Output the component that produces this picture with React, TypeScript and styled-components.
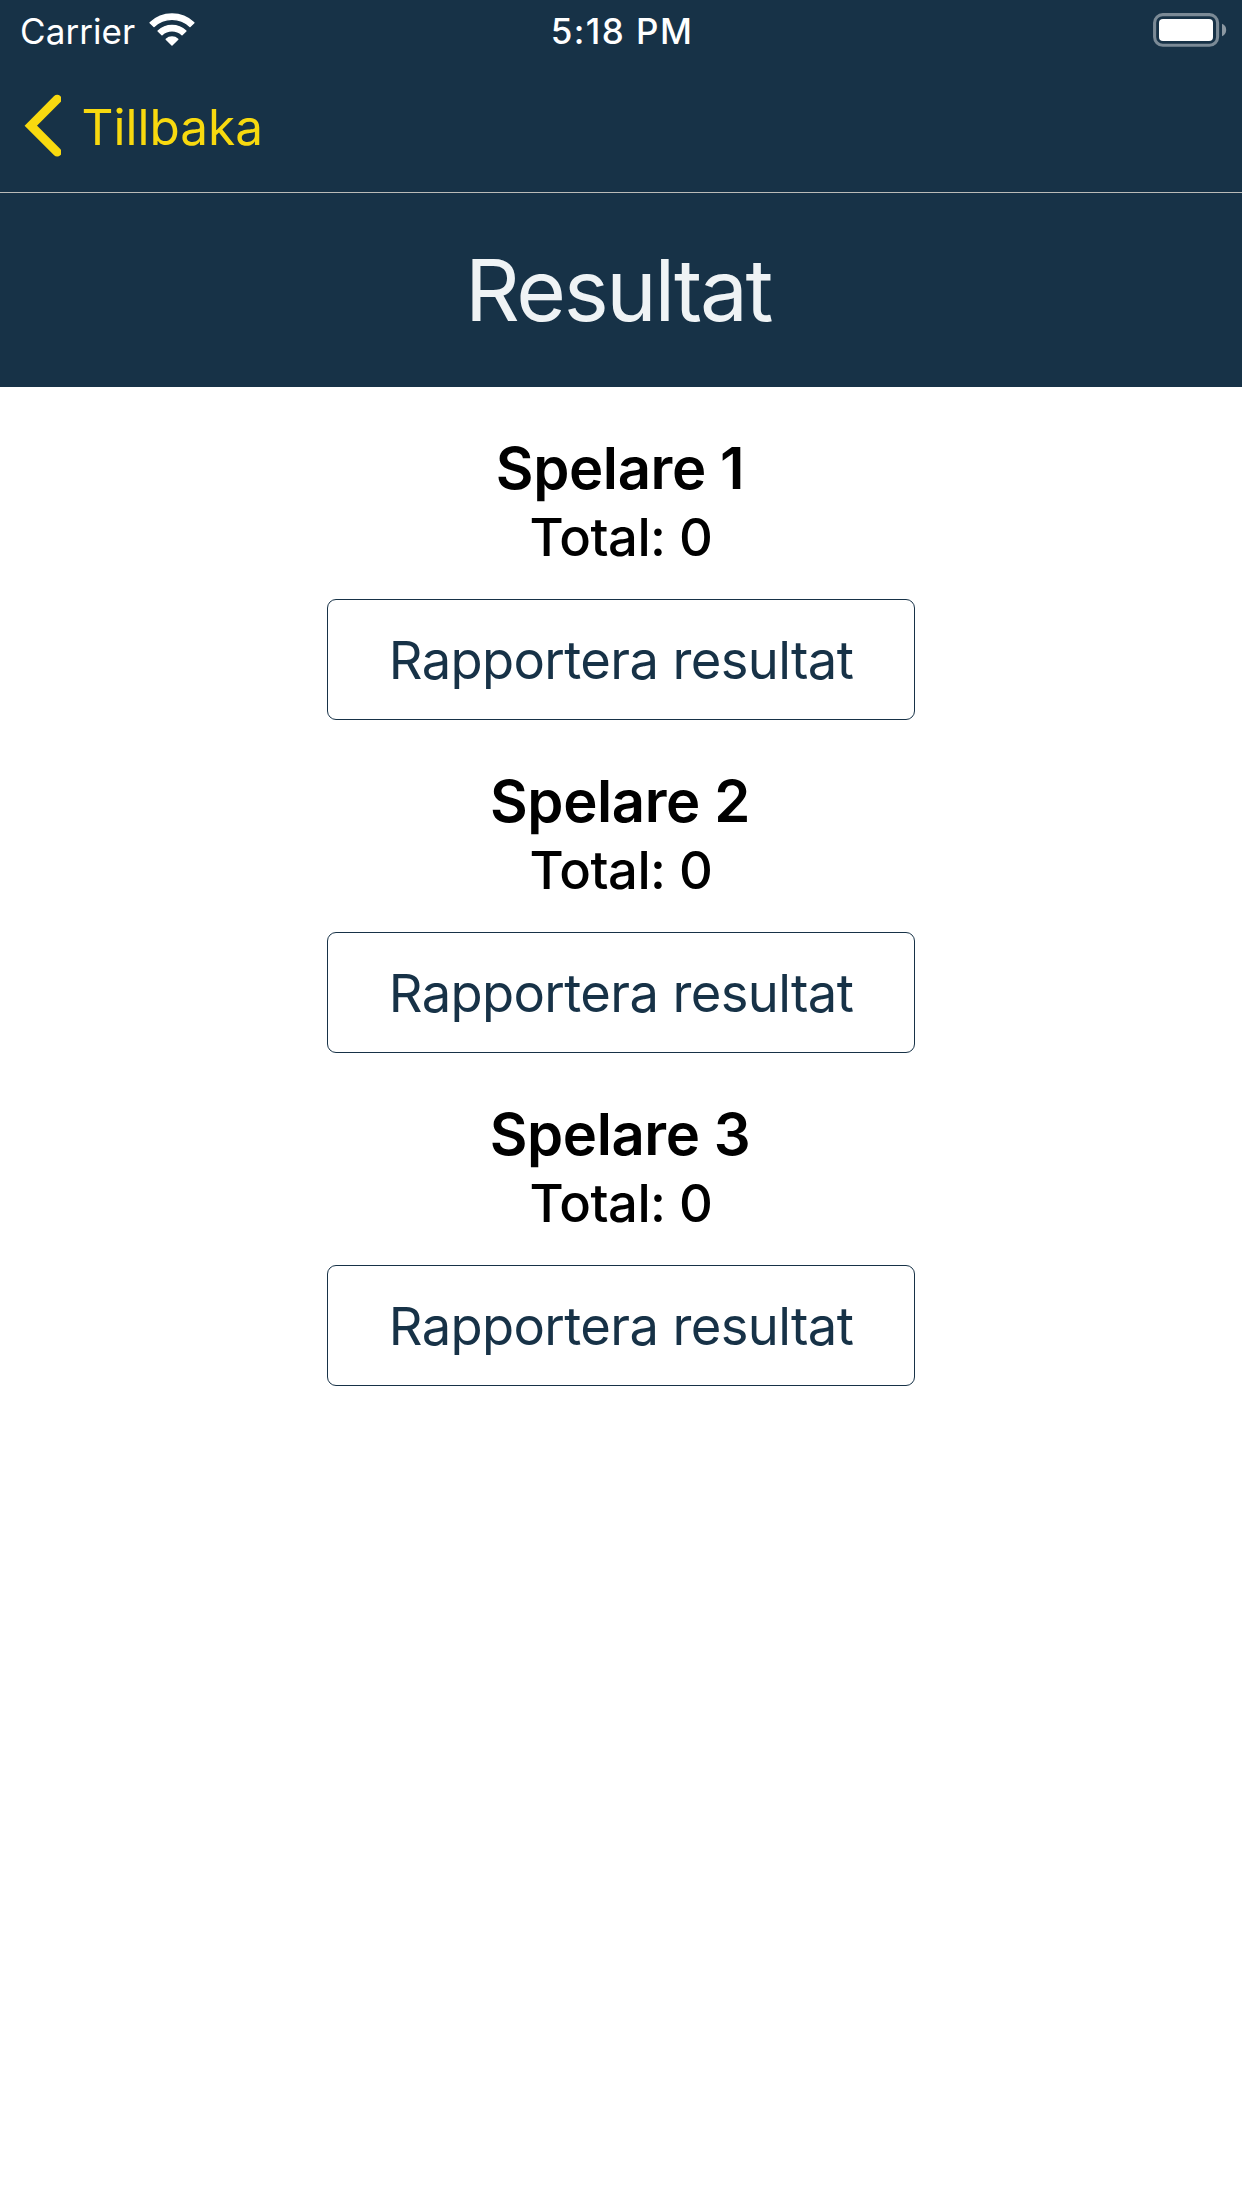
import React from 'react';
import styled, { createGlobalStyle } from 'styled-components';

const navy = '#173247';
const yellow = '#f8d90f';

const GlobalStyle = createGlobalStyle`
  *, *::before, *::after { box-sizing: border-box; }
  body {
    margin: 0;
    background: #fff;
    font-family: Inter, 'Liberation Sans', sans-serif;
  }
`;

const Screen = styled.div`
  display: flex;
  flex-direction: column;
  width: 1242px;
  min-height: 2208px;
  background: #fff;
`;

const Header = styled.header`
  display: flex;
  flex-direction: column;
  background: ${navy};
`;

const StatusBar = styled.div`
  display: grid;
  grid-template-columns: 1fr auto 1fr;
  height: 62px;
  padding: 0 15px 0 20px;
  color: #fff;
  font-size: 35px;
  line-height: 62px;
`;

const Carrier = styled.div`
  display: flex;
  gap: 12.5px;
  letter-spacing: 0.08px;
`;

const Clock = styled.time`
  font-weight: 500;
  letter-spacing: 1.45px;
  padding-right: 3px;
`;

const Power = styled.div`
  display: flex;
  justify-content: flex-end;
`;

const NavBar = styled.nav`
  display: flex;
  align-items: center;
  height: 131px;
  padding-left: 24px;
  border-bottom: 1px solid #babbb8;
`;

const BackButton = styled.button`
  display: flex;
  align-items: center;
  gap: 20.5px;
  padding: 0;
  border: 0;
  background: none;
  color: ${yellow};
  font: 400 49.5px/60px Inter, 'Liberation Sans', sans-serif;
  letter-spacing: 0;
`;

const Chevron = styled.svg`
  display: block;
  margin-top: -2px;
`;

const Title = styled.h1`
  margin: 0;
  height: 194px;
  padding-right: 6px;
  color: #eff3f5;
  font-size: 85.3px;
  font-weight: 400;
  line-height: 194px;
  letter-spacing: -2.35px;
  text-align: center;
`;

const PlayerList = styled.main`
  display: flex;
  flex-direction: column;
  gap: 46px;
  padding-top: 46px;
`;

const Player = styled.section`
  display: flex;
  flex-direction: column;
  align-items: center;
`;

const PlayerName = styled.h2`
  margin: 0;
  padding-right: 2px;
  color: #000;
  font-size: 58px;
  font-weight: 600;
  line-height: 70px;
  letter-spacing: -0.4px;
`;

const Total = styled.p`
  margin: 2px 0 30px;
  color: #000;
  font-size: 52.5px;
  font-weight: 500;
  line-height: 64px;
  letter-spacing: -0.5px;
`;

const ReportButton = styled.button`
  width: 588px;
  height: 121px;
  padding: 1px 0 0;
  border: 1px solid ${navy};
  border-radius: 9px;
  background: #fff;
  color: ${navy};
  font: 400 52.5px/118px Inter, 'Liberation Sans', sans-serif;
  letter-spacing: -0.63px;
  text-align: center;
`;

const WifiIcon = () => (
  <svg width="48" height="62" viewBox="148 0 48 62" fill="#fff" stroke="#fff" strokeWidth="1.4" strokeLinejoin="round">
    <path d="M150.1 22.8A31.8 31.8 0 0 1 193.9 22.8L190 26.5A26.2 26.2 0 0 0 154 26.5Z" />
    <path d="M158.1 30.9A20.4 20.4 0 0 1 185.9 30.9L182 34.7A14.8 14.8 0 0 0 162 34.7Z" />
    <path d="M166.2 39.2A8.8 8.8 0 0 1 177.8 39.2L172 45Z" />
  </svg>
);

const BatteryIcon = () => (
  <svg width="75" height="62" viewBox="1152 0 75 62">
    <rect x="1154.6" y="14.6" width="63" height="30.6" rx="8.2" fill="none" stroke="#7b8a96" strokeWidth="3.1" />
    <rect x="1159" y="19" width="54" height="22" rx="4" fill="#fff" />
    <path d="M1222 23.8C1224.6 24.8 1226.2 27 1226.2 30C1226.2 33 1224.6 35.2 1222 36.2Z" fill="#8b98a2" />
  </svg>
);

const players = ['Spelare 1', 'Spelare 2', 'Spelare 3'];

export default function App() {
  return (
    <Screen>
      <GlobalStyle />
      <Header>
        <StatusBar>
          <Carrier>
            Carrier
            <WifiIcon />
          </Carrier>
          <Clock>5:18 PM</Clock>
          <Power>
            <BatteryIcon />
          </Power>
        </StatusBar>
        <NavBar>
          <BackButton>
            <Chevron width="37" height="64" viewBox="24 94 37 64" fill="none" stroke={yellow} strokeWidth="8.8" strokeLinecap="round">
              <path d="M57.2 99.2L30.8 125.7L57.2 152.2" strokeLinejoin="miter" />
            </Chevron>
            Tillbaka
          </BackButton>
        </NavBar>
        <Title>Resultat</Title>
      </Header>
      <PlayerList>
        {players.map((name) => (
          <Player key={name}>
            <PlayerName>{name}</PlayerName>
            <Total>Total: 0</Total>
            <ReportButton>Rapportera resultat</ReportButton>
          </Player>
        ))}
      </PlayerList>
    </Screen>
  );
}
